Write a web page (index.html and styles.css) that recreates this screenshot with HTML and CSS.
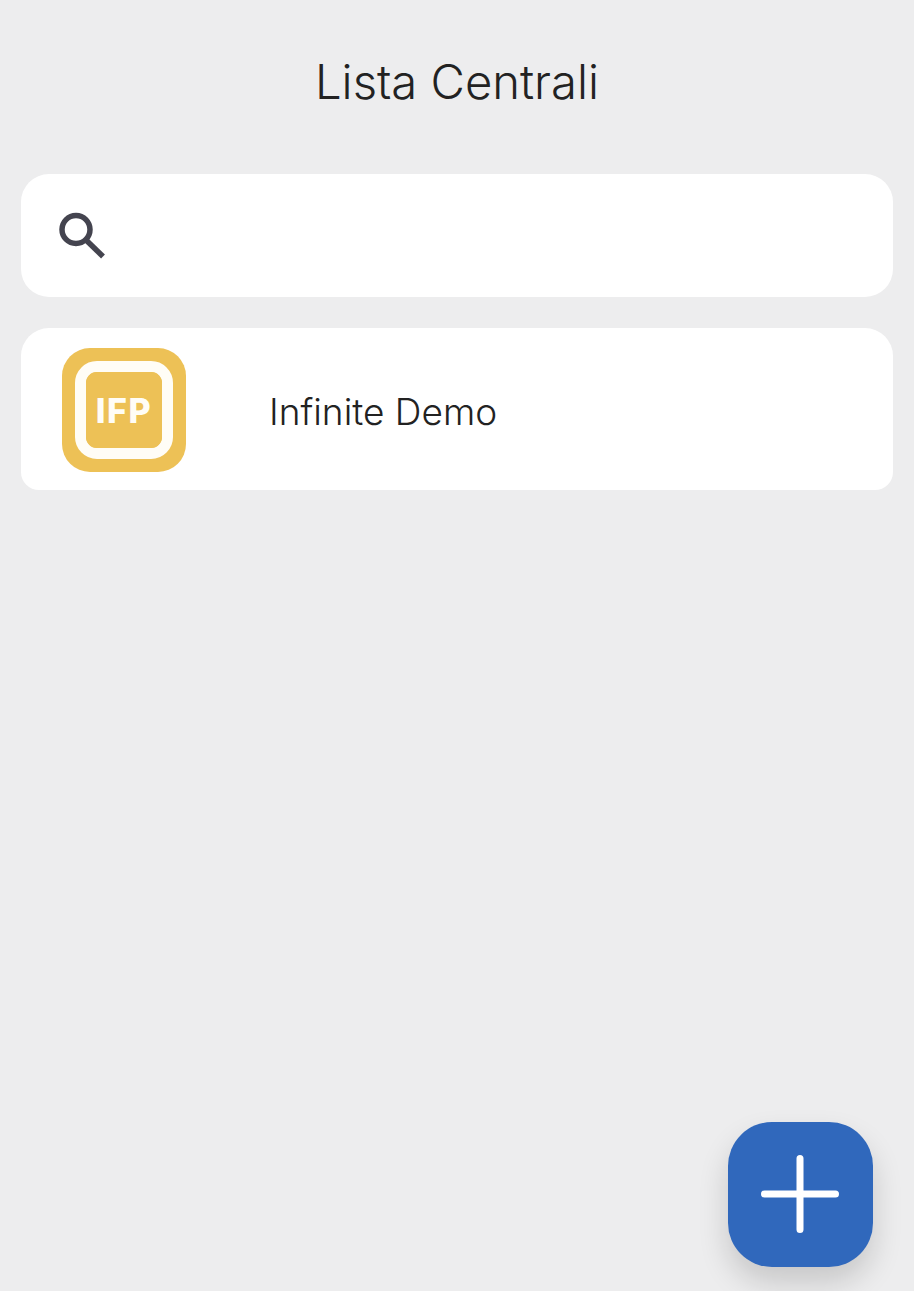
FILE: index.html
```html
<!DOCTYPE html>
<html lang="en">
<head>
    <meta charset="UTF-8">
    <meta name="viewport" content="width=device-width, initial-scale=1.0">
    <title>Lista Centrali</title>
    <link rel="stylesheet" href="styles.css">
</head>
<body>

    <h1 class="title">Lista Centrali</h1>

    <div class="search-box">
        <svg class="search-icon" width="48" height="48" viewBox="0 0 48 48">
            <circle cx="17" cy="17.5" r="14" fill="none" stroke="#44444f" stroke-width="5.5"/>
            <path d="M27 28 L44 44.5" fill="none" stroke="#44444f" stroke-width="5.5" stroke-linecap="butt"/>
        </svg>
    </div>

    <div class="central-item">
        <div class="logo">
            <div class="logo-ring">
                <div class="logo-inner">IFP</div>
            </div>
        </div>
        <span class="central-name">Infinite Demo</span>
    </div>

    <button type="button" class="add-btn" aria-label="Aggiungi">
        <svg width="78" height="78" viewBox="0 0 78 78">
            <path d="M3.5 39 H74.5 M39 3.5 V74.5" fill="none" stroke="#fff" stroke-width="7" stroke-linecap="round"/>
        </svg>
    </button>

</body>
</html>
```

FILE: styles.css
```css
html, body {
    height: 100%;
}
body {
    margin: 0;
    padding: 0 21px;
    box-sizing: border-box;
    position: relative;
    overflow: hidden;
    background-color: #ededee;
    font-family: Inter, "Noto Sans", sans-serif;
    color: #222;
}
.title {
    margin: 0;
    padding: 55px 0 65px;
    line-height: 54px;
    text-align: center;
    font-size: 47.2px;
    font-weight: 350;
}
.search-box {
    display: flex;
    align-items: center;
    height: 123px;
    padding-left: 38px;
    box-sizing: border-box;
    background: #fff;
    border-radius: 28px;
}
.search-icon {
    display: block;
}
.central-item {
    display: flex;
    align-items: flex-start;
    height: 162px;
    margin-top: 31px;
    padding: 20px 0 0 41px;
    box-sizing: border-box;
    background: #fff;
    border-radius: 28px 28px 18px 18px;
}
.logo {
    display: flex;
    align-items: center;
    justify-content: center;
    width: 124px;
    height: 124px;
    background: #edc156;
    border-radius: 28px;
}
.logo-ring {
    display: flex;
    align-items: center;
    justify-content: center;
    width: 98px;
    height: 98px;
    box-sizing: border-box;
    border: 11px solid #fffdf6;
    border-radius: 22px;
}
.logo-inner {
    display: flex;
    flex: none;
    align-items: center;
    justify-content: center;
    width: 76px;
    height: 76px;
    background: #edc156;
    border-radius: 11px;
    color: #fffdf6;
    font-size: 34px;
    font-weight: 800;
    letter-spacing: 1.5px;
}
.central-name {
    margin-left: 83px;
    line-height: 128px;
    font-size: 37px;
    font-weight: 350;
}
.add-btn {
    position: absolute;
    left: 728px;
    top: 1122px;
    display: flex;
    align-items: center;
    justify-content: center;
    width: 144.5px;
    height: 144.5px;
    padding: 0;
    border: none;
    border-radius: 44px;
    background: #3068bc;
    box-shadow: 0 16px 30px rgba(0, 0, 0, 0.16);
    cursor: pointer;
}
```
